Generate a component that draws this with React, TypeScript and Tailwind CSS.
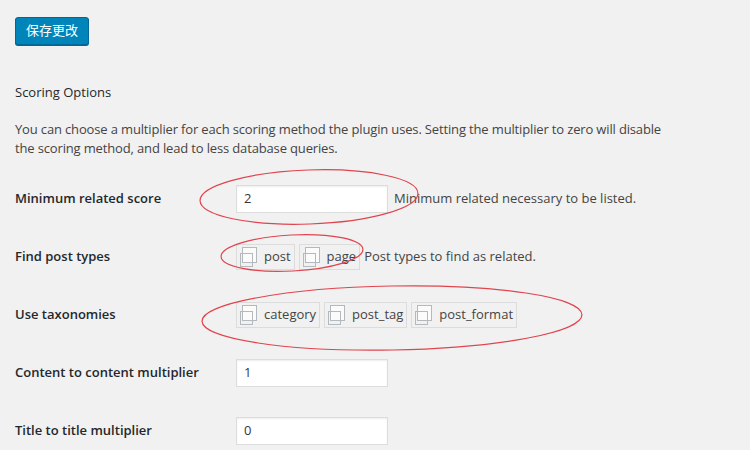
const Check = () => (
  <svg width="18" height="22" viewBox="0 0 18 22" className="shrink-0">
    <rect x="3.5" y="1.5" width="14" height="15" fill="#fbfbfb" stroke="#b4b9be" />
    <rect x="1.5" y="7.5" width="12" height="13" fill="none" stroke="#b4b9be" />
  </svg>
);

const CheckLabel = ({ label }: { label: string }) => (
  <label className="flex h-[26px] items-center gap-[7px] border border-[#dcdcdc] pl-[2px] pr-[3px]">
    <Check />
    <span>{label}</span>
  </label>
);

const Field = ({ value }: { value: string }) => (
  <div className="flex h-[28px] w-[152px] items-center border border-[#dddddd] bg-white pl-[7px] text-[#32373c] shadow-[inset_0_1px_2px_rgba(0,0,0,0.07)]">
    {value}
  </div>
);

const Row = ({ label, children }: { label: string; children: React.ReactNode }) => (
  <div className="flex h-[58px] items-center">
    <div className="w-[221px] shrink-0 font-semibold text-[#23282d]">{label}</div>
    <div className="flex items-center gap-[4px]">{children}</div>
  </div>
);

export default function App() {
  return (
    <div
      className="relative min-h-[450px] bg-[#f1f1f1] pl-[15px] pt-[17px] text-[13px] text-[#444444]"
      style={{ fontFamily: '"Open Sans", "Noto Sans CJK SC", sans-serif' }}
    >
      <button className="flex h-[28px] w-[74px] items-center justify-center rounded-[3px] border border-[#006799] bg-[#0085ba] text-[13px] text-white shadow-[0_1px_0_#006799]">
        保存更改
      </button>

      <h2 className="mt-[37px] text-[13px] leading-[20px] text-[#23282d]">Scoring Options</h2>

      <p className="mt-[18px] w-[700px] leading-[19px] tracking-[-0.15px]">
        You can choose a multiplier for each scoring method the plugin uses. Setting the multiplier to zero will disable
        <br />
        the scoring method, and lead to less database queries.
      </p>

      <div className="mt-[12px]">
        <Row label="Minimum related score">
          <Field value="2" />
          <span className="ml-[2px]">Minimum related necessary to be listed.</span>
        </Row>
        <Row label="Find post types">
          <CheckLabel label="post" />
          <CheckLabel label="page" />
          <span>Post types to find as related.</span>
        </Row>
        <Row label="Use taxonomies">
          <CheckLabel label="category" />
          <CheckLabel label="post_tag" />
          <CheckLabel label="post_format" />
        </Row>
        <Row label="Content to content multiplier">
          <Field value="1" />
        </Row>
        <Row label="Title to title multiplier">
          <Field value="0" />
        </Row>
      </div>

      {/* red annotation marks */}
      <svg className="pointer-events-none absolute left-0 top-0" width="750" height="450">
        <ellipse cx="309" cy="197" rx="109" ry="27" fill="none" stroke="#e0444e" strokeWidth="1.2" transform="rotate(-2 309 197)" />
        <ellipse cx="292" cy="253" rx="71" ry="18" fill="none" stroke="#e0444e" strokeWidth="1.2" transform="rotate(-3 292 253)" />
        <ellipse cx="392" cy="318" rx="190" ry="32" fill="none" stroke="#e0444e" strokeWidth="1.2" transform="rotate(-1 392 318)" />
      </svg>
    </div>
  );
}
